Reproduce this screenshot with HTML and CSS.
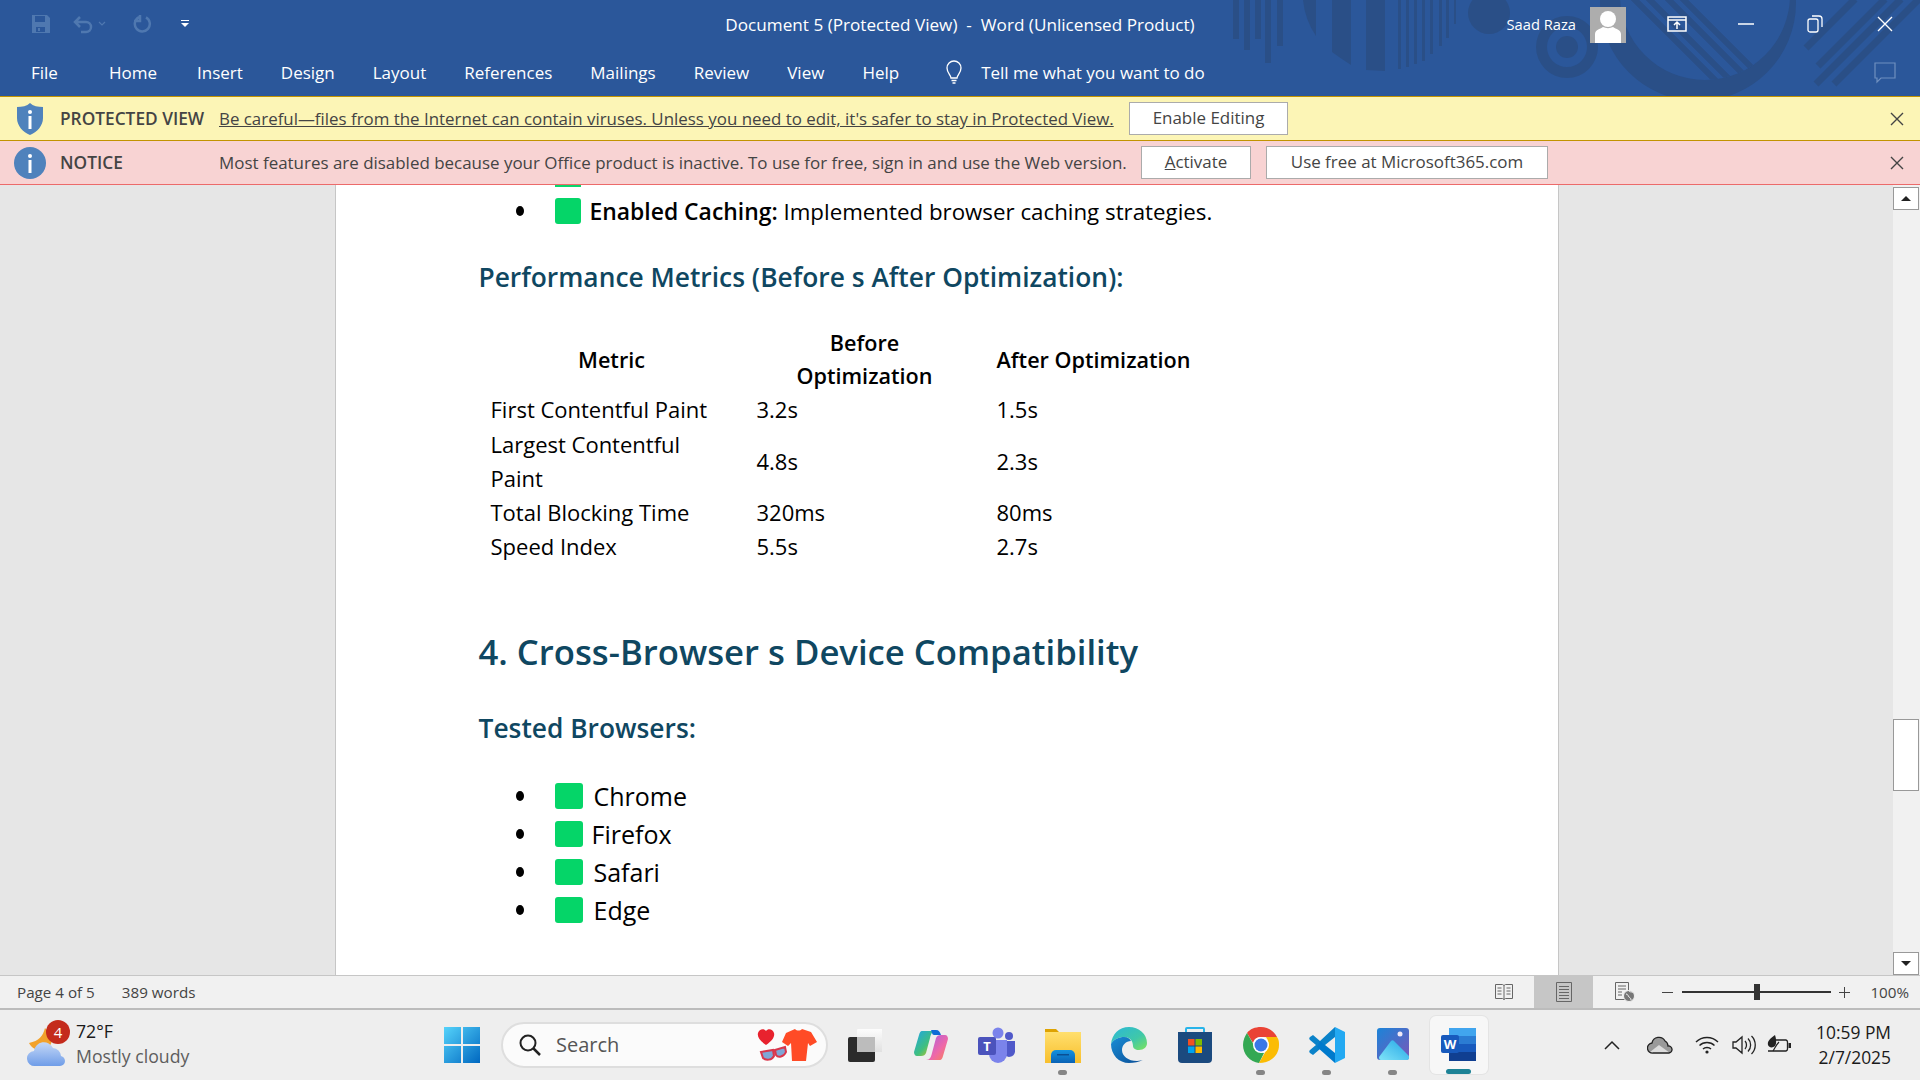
FILE: index.html
```html
<!DOCTYPE html>
<html lang="en">
<head>
    <meta charset="UTF-8">
    <title>Document 5 (Protected View) - Word (Unlicensed Product)</title>
    <link rel="stylesheet" href="styles.css">
</head>
<body>
    <!-- Title bar and ribbon tabs -->
    <header class="ribbon">
        <svg class="ribbon-art" viewBox="1200 0 720 96" width="720" height="96">
            <defs>
                <clipPath id="ringInner"><circle cx="1705" cy="-5" r="85"/></clipPath>
            </defs>
            <g fill="#2a4f87">
                <rect x="1233" width="6" height="39"/>
                <rect x="1244" width="6" height="50"/>
                <rect x="1255" width="6" height="39"/>
                <rect x="1265" width="6" height="63"/>
                <rect x="1277" width="6" height="46"/>
                <path d="M1303 0Q1305 20 1316 36V0Z"/>
                <path d="M1332 0V52Q1340 58 1351 65V0Z"/>
                <path d="M1366 0V70L1385 71V0Z"/>
                <rect x="1398" width="3" height="69"/>
                <rect x="1406" width="3" height="67"/>
                <rect x="1414" width="3" height="64"/>
                <rect x="1422" width="3" height="61"/>
                <rect x="1430" width="3" height="54"/>
                <rect x="1439" width="3" height="46"/>
                <rect x="1446" width="3" height="38"/>
                <rect x="1454" width="2" height="24"/>
                <circle cx="1489" cy="13" r="21"/>
                <path fill-rule="evenodd" d="M1536 47a31 31 0 1 0 62 0a31 31 0 1 0-62 0ZM1547 47a20 20 0 1 1 40 0a20 20 0 1 1-40 0Z"/>
                <circle cx="1567" cy="47" r="11"/>
                <path fill-rule="evenodd" d="M1600 3a98 98 0 1 0 196 0a98 98 0 1 0-196 0ZM1620-5a85 85 0 1 1 170 0a85 85 0 1 1-170 0Z"/>
            </g>
            <g stroke="#2a4f87" stroke-width="6" clip-path="url(#ringInner)">
                <path d="M1625-10L1730 95M1640-10L1745 95M1655-14L1760 91M1670-14L1775 91"/>
            </g>
            <g stroke="#2a4f87" stroke-width="7">
                <path d="M1806 48L1855-1M1818 66L1885-1M1816 84L1901-1M1834 84L1919-1"/>
            </g>
        </svg>

        <div class="title-row">
            <div class="qat">
                <svg width="20" height="20" viewBox="0 0 20 20"><path fill="#4f78b0" d="M1 1h15l3 3v15H1z"/><path fill="#2b579a" d="M4 2h10v6H4zM5 13h9v5H5z"/><path fill="#4f78b0" d="M7 14h2v3H7z"/></svg>
                <svg class="qat-undo" width="24" height="20" viewBox="0 0 24 20"><path fill="none" stroke="#4f78b0" stroke-width="2.5" d="M8 3L3 8l5 5M3 8h11a5 5 0 0 1 0 10H9"/></svg>
                <svg class="qat-drop" width="8" height="6" viewBox="0 0 8 6"><path fill="none" stroke="#4f78b0" stroke-width="1.2" d="M1 1l3 3 3-3"/></svg>
                <svg class="qat-redo" width="20" height="20" viewBox="0 0 20 20"><path fill="none" stroke="#4f78b0" stroke-width="2.5" d="M6 3.2a7.5 7.5 0 1 0 7 .2M7 1v6H1"/></svg>
                <svg class="qat-more" width="8" height="10" viewBox="0 0 8 10"><path fill="#fff" d="M0 1h8v1H0zM0 4h8L4 8z"/></svg>
            </div>
            <div class="doc-title">Document 5 (Protected View) &nbsp;-&nbsp; Word (Unlicensed Product)</div>
            <div class="win-tools">
                <span class="user-name">Saad Raza</span>
                <svg class="avatar" width="36" height="36" viewBox="0 0 36 36"><rect width="36" height="36" fill="#adadad"/><circle cx="18" cy="12" r="8" fill="#fff"/><path fill="#fff" d="M5 36v-9c0-4 5-5 8-7 3 1.500 7 1.500 10 0 3 2 8 3 8 7v9z"/></svg>
                <svg class="win-btn-display" width="20" height="16" viewBox="0 0 20 16"><path fill="none" stroke="#fff" stroke-width="1.500" d="M1 1h18v14H1zM1 4h18M10 13V6.500M7 9l3-3 3 3"/></svg>
                <svg class="win-btn-min" width="16" height="16" viewBox="0 0 16 16"><path stroke="#fff" stroke-width="1.500" d="M0 8h16"/></svg>
                <svg class="win-btn-restore" width="16" height="18" viewBox="0 0 16 18"><path fill="none" stroke="#fff" stroke-width="1.300" d="M1 6a2 2 0 0 1 2-2h6a2 2 0 0 1 2 2v9a2 2 0 0 1-2 2H3a2 2 0 0 1-2-2zM5 1h7a3 3 0 0 1 3 3v8"/></svg>
                <svg class="win-btn-close" width="16" height="16" viewBox="0 0 16 16"><path stroke="#fff" stroke-width="1.400" d="M1 1l14 14M15 1L1 15"/></svg>
            </div>
        </div>

        <nav class="tabs-row">
            <span class="tab-file">File</span>
            <span class="tab-home">Home</span>
            <span>Insert</span>
            <span>Design</span>
            <span>Layout</span>
            <span>References</span>
            <span>Mailings</span>
            <span>Review</span>
            <span>View</span>
            <span>Help</span>
            <span class="tell-me">
                <svg width="20" height="24" viewBox="0 0 20 24"><path fill="none" stroke="#fff" stroke-width="1.300" d="M7 18c0-3-4-5-4-10a7 7 0 0 1 14 0c0 5-4 7-4 10zM7.500 20.500h5M8.500 23h3"/></svg>
                Tell me what you want to do
            </span>
            <svg class="comment-icon" width="22" height="22" viewBox="0 0 22 22"><path fill="none" stroke="#6f8fbf" stroke-width="1.200" d="M1 1h20v15H7l-4 4v-4H1z"/></svg>
        </nav>
    </header>

    <!-- Message bars -->
    <div class="msg-bar msg-yellow">
        <svg class="msg-icon" width="28" height="32" viewBox="0 0 28 32"><path fill="#4f82bc" d="M14 0c3 3 8 4 13 4v11c0 8-6 14-13 17C7 29 1 23 1 15V4c5 0 10-1 13-4z"/><circle cx="14" cy="9" r="2" fill="#fff"/><rect x="12.500" y="13" width="3" height="13" fill="#fff"/></svg>
        <strong class="msg-label">PROTECTED VIEW</strong>
        <a class="msg-text msg-link">Be careful—files from the Internet can contain viruses. Unless you need to edit, it's safer to stay in Protected View.</a>
        <button class="msg-btn btn-enable">Enable Editing</button>
        <svg class="msg-close" width="14" height="14" viewBox="0 0 14 14"><path stroke="#444" stroke-width="1.400" d="M1 1l12 12M13 1L1 13"/></svg>
    </div>
    <div class="msg-bar msg-pink">
        <svg class="msg-icon msg-icon-round" width="32" height="32" viewBox="0 0 32 32"><circle cx="16" cy="16" r="16" fill="#4f82bc"/><circle cx="16" cy="9" r="2" fill="#fff"/><rect x="14.500" y="13" width="3" height="13" fill="#fff"/></svg>
        <strong class="msg-label">NOTICE</strong>
        <span class="msg-text msg-notice">Most features are disabled because your Office product is inactive. To use for free, sign in and use the Web version.</span>
        <button class="msg-btn btn-activate"><u>A</u>ctivate</button>
        <button class="msg-btn btn-free">Use free at Microsoft365.com</button>
        <svg class="msg-close" width="14" height="14" viewBox="0 0 14 14"><path stroke="#444" stroke-width="1.400" d="M1 1l12 12M13 1L1 13"/></svg>
    </div>

    <!-- Document area -->
    <main class="doc-area">
        <div class="doc-scroll">
            <article class="page">
                <div class="clipped-square"></div>
                <div class="doc-item item-first">
                    <i class="dot"></i><i class="square square-small"></i>
                    <span class="item-body"><b>Enabled Caching:</b> Implemented browser caching strategies.</span>
                </div>

                <h3 class="doc-h3 h3-metrics">Performance Metrics (Before s After Optimization):</h3>

                <table class="metrics">
                    <thead>
                        <tr>
                            <th>Metric</th>
                            <th>Before Optimization</th>
                            <th>After Optimization</th>
                        </tr>
                    </thead>
                    <tbody>
                        <tr><td>First Contentful Paint</td><td>3.2s</td><td>1.5s</td></tr>
                        <tr><td>Largest Contentful Paint</td><td>4.8s</td><td>2.3s</td></tr>
                        <tr><td>Total Blocking Time</td><td>320ms</td><td>80ms</td></tr>
                        <tr><td>Speed Index</td><td>5.5s</td><td>2.7s</td></tr>
                    </tbody>
                </table>

                <h2 class="doc-h2">4. Cross-Browser s Device Compatibility</h2>
                <h3 class="doc-h3 h3-tested">Tested Browsers:</h3>

                <ul class="browser-list">
                    <li class="doc-item"><i class="dot"></i><i class="square"></i><span>Chrome</span></li>
                    <li class="doc-item"><i class="dot"></i><i class="square"></i><span class="firefox">Firefox</span></li>
                    <li class="doc-item"><i class="dot"></i><i class="square"></i><span>Safari</span></li>
                    <li class="doc-item"><i class="dot"></i><i class="square"></i><span>Edge</span></li>
                </ul>
            </article>
        </div>
        <aside class="scrollbar">
            <div class="sb-btn"><i class="arrow-up"></i></div>
            <div class="sb-thumb"></div>
            <div class="sb-btn sb-btn-down"><i class="arrow-down"></i></div>
        </aside>
    </main>

    <!-- Word status bar -->
    <footer class="status-bar">
        <span class="status-page">Page 4 of 5</span>
        <span class="status-words">389 words</span>
        <div class="status-right">
            <svg class="view-icon" width="20" height="20" viewBox="0 0 20 20"><path fill="none" stroke="#666" d="M1.500 2.500h7l1.500 1 1.500-1h7v14h-7l-1.500 1-1.500-1h-7zM10 3.500v14M3.500 6h4M3.500 9h4M3.500 12h4M12.500 6h4M12.500 9h4M12.500 12h4"/></svg>
            <div class="view-active">
                <svg width="18" height="22" viewBox="0 0 18 22"><path fill="none" stroke="#666" d="M1.500 1.500h15v19h-15zM4 5.500h10M4 8.500h10M4 11.500h10M4 14.500h10M4 17.500h10"/></svg>
            </div>
            <svg class="view-web" width="22" height="22" viewBox="0 0 22 22"><path fill="none" stroke="#666" d="M1.500 1.500h13v17h-13zM4 5h8M4 8h8M4 11h4M4 14h4"/><circle cx="15" cy="15" r="5.500" fill="#777" stroke="#f1f1f1"/><path stroke="#f1f1f1" fill="none" d="M12 13c2 0 2 2 3 3s2 1 2 3M15 10c1 1 2 1 4 1"/></svg>
            <span class="zoom-minus"></span>
            <div class="zoom-slider"><i class="zoom-thumb"></i></div>
            <span class="zoom-plus"></span>
            <span class="zoom-value">100%</span>
        </div>
    </footer>

    <!-- Windows taskbar -->
    <footer class="taskbar">
        <div class="weather">
            <svg class="weather-icon" width="42" height="46" viewBox="0 0 42 46">
                <defs>
                    <linearGradient id="cloudFill" x1="0" y1="0" x2="0" y2="1"><stop offset="0" stop-color="#c5d8f7"/><stop offset="1" stop-color="#6f9de8"/></linearGradient>
                </defs>
                <path fill="#f2a22c" d="M18 6c-2 8-6 13-16 15 3 6 9 8 15 7 6-2 9-8 8-14z"/>
                <path fill="url(#cloudFill)" d="M8 44a7.500 7.500 0 0 1-1-15 10 10 0 0 1 19-3 8.500 8.500 0 0 1 8 8 5.500 5.500 0 0 1 4 5 5 5 0 0 1-5 5z"/>
            </svg>
            <span class="weather-badge">4</span>
            <div class="weather-text">
                <span class="weather-temp">72°F</span>
                <span class="weather-desc">Mostly cloudy</span>
            </div>
        </div>

        <div class="tb-item tb-start">
            <svg width="36" height="36" viewBox="0 0 36 36">
                <defs>
                    <linearGradient id="winFill" x1="0" y1="0" x2="1" y2="1"><stop offset="0" stop-color="#55d3fb"/><stop offset="1" stop-color="#0067c0"/></linearGradient>
                </defs>
                <path fill="url(#winFill)" d="M0 0h17v17H0zM19 0h17v17H19zM0 19h17v17H0zM19 19h17v17H19z"/>
            </svg>
        </div>

        <div class="tb-search">
            <svg width="24" height="24" viewBox="0 0 24 24"><circle cx="10" cy="10" r="7.500" fill="none" stroke="#222" stroke-width="2"/><path stroke="#222" stroke-width="2.500" d="M15.500 15.500L22 22"/></svg>
            <span>Search</span>
            <svg class="search-art" width="64" height="38" viewBox="0 0 64 38">
                <path fill="#e8222e" d="M12 19C6 15 3 11 4 7c1-4 6-5 8-2 2-3 7-2 8 2 1 4-2 8-8 12z"/>
                <path fill="#ff4b26" d="M32 7l9-4c2 2 5 2 7 0l9 3 6 10-7 4-2-3-2 18H38l-1-18-3 3-6-4z"/>
                <path fill="#7fa6d6" stroke="#d9364b" stroke-width="2" d="M7 26l12-2 1 6c-2 4-8 5-11 2zM21 24l10-3 1 5c-2 5-8 6-10 3z"/>
            </svg>
        </div>

        <div class="tb-item tb-taskview">
            <svg width="36" height="36" viewBox="0 0 36 36">
                <defs>
                    <linearGradient id="tvBack" x1="0" y1="0" x2="0" y2="1"><stop offset="0" stop-color="#fff"/><stop offset="1" stop-color="#dedede"/></linearGradient>
                </defs>
                <rect x="2" y="10" width="27" height="25" rx="2" fill="#2b2b2b"/>
                <rect x="11" y="2" width="26" height="23" rx="1" fill="url(#tvBack)" fill-opacity=".85"/>
                <rect x="11" y="10" width="18" height="15" fill="#bcbcbc"/>
            </svg>
        </div>

        <div class="tb-item">
            <svg width="36" height="36" viewBox="0 0 36 36">
                <defs>
                    <linearGradient id="copA" x1="0" y1="0" x2="1" y2="1"><stop offset="0" stop-color="#1fa5e8"/><stop offset=".55" stop-color="#3fbf7f"/><stop offset="1" stop-color="#f7c300"/></linearGradient>
                    <linearGradient id="copB" x1="0" y1="0" x2="1" y2="1"><stop offset="0" stop-color="#a45ce8"/><stop offset=".6" stop-color="#ee68a8"/><stop offset="1" stop-color="#f9834f"/></linearGradient>
                </defs>
                <path fill="url(#copA)" d="M9 4h14c-4 0-5 3-6 7l-4 15c-1 2-2 3-5 3H4c-2 0-3-2-3-4L6 8c.5-2 1.500-4 3-4z"/>
                <path fill="url(#copB)" d="M27 33H13c4 0 5-3 6-7l4-15c1-2 2-3 5-3h4c2 0 3 2 3 4l-5 17c-.5 2-1.500 4-3 4z"/>
                <path fill="#0f6cd6" d="M18 3h5c3 0 4 2 5 5h-7c-2 0-2-3-3-5z"/>
            </svg>
        </div>

        <div class="tb-item">
            <svg width="38" height="36" viewBox="0 0 38 36">
                <circle cx="20" cy="6" r="5.500" fill="#7b83eb"/>
                <circle cx="31" cy="9" r="4" fill="#5059c9"/>
                <path fill="#5059c9" d="M26 14h11v11a6 6 0 0 1-11 2z"/>
                <path fill="#7b83eb" d="M11 13h18v14a9 9 0 0 1-18 0z"/>
                <rect x="0" y="10" width="18" height="18" rx="2" fill="#4b53bc"/>
                <text class="icon-letter" x="9" y="24" text-anchor="middle" font-size="13">T</text>
            </svg>
        </div>

        <div class="tb-item">
            <svg width="36" height="36" viewBox="0 0 36 36">
                <defs>
                    <linearGradient id="folder" x1="0" y1="0" x2="0" y2="1"><stop offset="0" stop-color="#ffdf6e"/><stop offset="1" stop-color="#f8bf2c"/></linearGradient>
                    <linearGradient id="folderTab" x1="0" y1="0" x2="0" y2="1"><stop offset="0" stop-color="#1392e0"/><stop offset="1" stop-color="#0a62b5"/></linearGradient>
                </defs>
                <path fill="#dea302" d="M0 2h11l4 4h21v6H0z"/>
                <rect y="5" width="36" height="31" fill="url(#folder)"/>
                <path fill="url(#folderTab)" d="M6 36v-8a5 5 0 0 1 5-5h14a5 5 0 0 1 5 5v8z"/>
                <rect x="12" y="27" width="12" height="1.500" fill="#0a4f94"/>
            </svg>
            <i class="tb-dot"></i>
        </div>

        <div class="tb-item">
            <svg width="36" height="36" viewBox="0 0 36 36">
                <defs>
                    <linearGradient id="edgeTop" x1="0" y1="0" x2="1" y2="1"><stop offset="0" stop-color="#2bb8d8"/><stop offset=".6" stop-color="#40c8a8"/><stop offset="1" stop-color="#7ee35c"/></linearGradient>
                    <linearGradient id="edgeLow" x1="0" y1="0" x2="1" y2="1"><stop offset="0" stop-color="#1a8ed6"/><stop offset="1" stop-color="#0a4d96"/></linearGradient>
                </defs>
                <path fill="url(#edgeTop)" d="M18 0c10 0 18 7 18 16 0 4-3 7-8 7-4 0-6-2-6-4 0-6-4-9-9-9C8 10 3 12 0 17 1 7 8 0 18 0z"/>
                <path fill="url(#edgeLow)" d="M0 17c3-5 8-7 13-7 4 0 6 2 7 4-5 0-9 4-9 9 0 6 6 11 15 11 3 0 5-1 6-1-4 2-9 3-14 3C8 36 0 28 0 17z"/>
            </svg>
        </div>

        <div class="tb-item">
            <svg width="36" height="36" viewBox="0 0 36 36">
                <path fill="none" stroke="#28b4ea" stroke-width="2" d="M9 7V2a1 1 0 0 1 1-1h16a1 1 0 0 1 1 1v5"/>
                <path fill="#1b4a7f" d="M1 5h34v27a4 4 0 0 1-4 4H5a4 4 0 0 1-4-4z"/>
                <path fill="#f25022" d="M11 12h6.500v6.500H11z"/><path fill="#7fba00" d="M18.500 12H25v6.500h-6.500z"/>
                <path fill="#00a4ef" d="M11 19.500h6.500V26H11z"/><path fill="#ffb900" d="M18.500 19.500H25V26h-6.500z"/>
            </svg>
        </div>

        <div class="tb-item">
            <svg width="36" height="36" viewBox="0 0 36 36">
                <path fill="#ea4335" d="M18 0c7 0 13 4 16 10H18a8 8 0 0 0-8 6L4 6c3-4 8-6 14-6z"/>
                <path fill="#34a853" d="M4 6l8 14c2 3 5 6 9 6l-5 10C7 35 0 27 0 18 0 13 2 9 4 6z"/>
                <path fill="#fbbc04" d="M34 10c2 3 2 5 2 8 0 10-8 18-20 18l8-14c2-3 2-8-1-12z"/>
                <circle cx="18" cy="18" r="8" fill="#fff"/>
                <circle cx="18" cy="18" r="6.500" fill="#3b78e7"/>
            </svg>
            <i class="tb-dot"></i>
        </div>

        <div class="tb-item">
            <svg width="36" height="36" viewBox="0 0 36 36">
                <path fill="#23a9f2" d="M26 0l10 5v26l-10 5z"/>
                <path fill="#0a82c9" d="M26 0v10L11 22 4 28l-3-2c-1-1-1-2 0-3l6-5-6-5c-1-1-1-2 0-3l3-2 7 6z"/>
                <path fill="#007acc" d="M11 14L26 26v10L8 20z"/>
            </svg>
            <i class="tb-dot"></i>
        </div>

        <div class="tb-item">
            <svg width="32" height="34" viewBox="0 0 32 34">
                <defs>
                    <linearGradient id="phBg" x1="0" y1="0" x2="1" y2="1"><stop offset="0" stop-color="#1b84d8"/><stop offset="1" stop-color="#7a57b8"/></linearGradient>
                    <linearGradient id="phHill" x1="0" y1="1" x2="1" y2="0"><stop offset="0" stop-color="#7fe3f8"/><stop offset="1" stop-color="#23a6e6"/></linearGradient>
                </defs>
                <rect width="32" height="32" rx="3" fill="url(#phBg)"/>
                <circle cx="23" cy="6" r="2.500" fill="#f1e9f7"/>
                <path fill="url(#phHill)" d="M2 29l12-16c1-1 2-1 3 0l15 15v2a2 2 0 0 1-2 2H4c-2 0-2-2-2-3z"/>
            </svg>
            <i class="tb-dot"></i>
        </div>

        <div class="tb-item tb-active">
            <svg width="36" height="34" viewBox="0 0 36 34">
                <rect x="8" width="27" height="8" fill="#41a5ee"/>
                <rect x="8" y="8" width="27" height="8" fill="#2b7cd3"/>
                <rect x="8" y="16" width="27" height="8" fill="#185abd"/>
                <rect x="8" y="24" width="27" height="9" fill="#103f91"/>
                <rect y="7" width="18" height="18" rx="2" fill="#185abd"/>
                <text class="icon-letter" x="9" y="21" text-anchor="middle" font-size="13">W</text>
            </svg>
            <i class="tb-bar"></i>
        </div>

        <div class="tray">
            <svg class="tray-up" width="16" height="10" viewBox="0 0 16 10"><path fill="none" stroke="#222" stroke-width="1.500" d="M1 9l7-7 7 7"/></svg>
            <svg class="tray-cloud" width="26" height="18" viewBox="0 0 26 18"><path fill="#9a9a9a" d="M6 17a5 5 0 0 1-1-10 7 7 0 0 1 13-2 6 6 0 0 1 3 5 3.500 3.500 0 0 1 1 7z"/><path fill="#dcdcdc" d="M3 16l9-7 11 8H6z"/><path fill="none" stroke="#222" stroke-width="1.300" d="M6 17a5 5 0 0 1-1-10 7 7 0 0 1 13-2 6 6 0 0 1 3 5 3.500 3.500 0 0 1 1 7z"/></svg>
            <svg class="tray-wifi" width="24" height="18" viewBox="0 0 24 18"><path fill="none" stroke="#222" stroke-width="1.400" d="M1 6c6-6 16-6 22 0M4.500 9.500c4-4 11-4 15 0M8 13c2-2 6-2 8 0"/><circle cx="12" cy="16" r="1.600" fill="#222"/></svg>
            <svg class="tray-vol" width="24" height="20" viewBox="0 0 24 20"><path fill="none" stroke="#222" stroke-width="1.300" d="M1 7v6h3l6 5V2L4 7zM13 6c2 2 2 6 0 8M16 3.500c3.500 3.500 3.500 9.500 0 13M19.500 1c5 5 5 13 0 18"/></svg>
            <svg class="tray-batt" width="24" height="20" viewBox="0 0 24 20"><path fill="none" stroke="#222" stroke-width="1.300" d="M5 5h14a2 2 0 0 1 1.500 2v7a2 2 0 0 1-1.500 2H1"/><path fill="#222" d="M21.500 8H24v5h-2.500zM8 0C4 3 0 6 1 10c1 3 5 3 7 1 2-3 1-8 0-11z"/><path fill="none" stroke="#222" stroke-width="1.200" d="M12 7C9 10 8 13 6 16"/></svg>
            <div class="clock">
                <span>10:59 PM</span>
                <span>2/7/2025</span>
            </div>
        </div>
    </footer>
</body>
</html>
```
FILE: styles.css
```css
html, body {
    margin: 0;
    padding: 0;
}
body {
    width: 1920px;
    height: 1080px;
    overflow: hidden;
    display: flex;
    flex-direction: column;
    font-family: "Open Sans", Arial, sans-serif;
    background: #eeeeee;
}

/* ribbon */
.ribbon {
    position: relative;
    height: 96px;
    flex: none;
    background: #2b579a;
    color: #fff;
    overflow: hidden;
}
.ribbon-art {
    position: absolute;
    top: 0;
    right: 0;
}
.title-row {
    position: relative;
    height: 48px;
    display: grid;
    grid-template-columns: 1fr auto 1fr;
    align-items: center;
}
.qat {
    display: flex;
    align-items: center;
    padding-left: 31px;
}
.qat-undo {
    margin-left: 21px;
}
.qat-drop {
    margin-left: 2px;
}
.qat-redo {
    margin-left: 27px;
}
.qat-more {
    margin-left: 28px;
}
.doc-title {
    font-size: 17.150px;
    white-space: nowrap;
}
.win-tools {
    display: flex;
    align-items: center;
    justify-content: flex-end;
}
.user-name {
    font-size: 14.700px;
    margin-right: 14px;
}
.avatar {
    margin-top: 2px;
}
.win-btn-display {
    margin-left: 41px;
}
.win-btn-min {
    margin-left: 51px;
}
.win-btn-restore {
    margin-left: 53px;
}
.win-btn-close {
    margin-left: 54px;
    margin-right: 27px;
}
.tabs-row {
    position: relative;
    height: 48px;
    display: flex;
    align-items: center;
    gap: 38px;
    padding-left: 31px;
    font-size: 17px;
}
.tab-file {
    margin-right: 13px;
}
.tab-home {
    margin-right: 2px;
}
.tell-me {
    display: flex;
    align-items: center;
    gap: 17px;
    margin-left: 7px;
}
.comment-icon {
    margin-left: auto;
    margin-right: 24px;
    margin-top: 2px;
}

/* message bars */
.msg-bar {
    height: 43px;
    flex: none;
    box-sizing: content-box;
    display: flex;
    align-items: center;
    color: #444;
    font-size: 16.950px;
    white-space: nowrap;
}
.msg-yellow {
    background: #fcf5b6;
    border-top: 1px solid #c29300;
}
.msg-pink {
    background: #f8d3d3;
    border-top: 1px solid #c29300;
    border-bottom: 1px solid #ec6a6a;
}
.msg-icon {
    flex: none;
    margin: 0 16px;
}
.msg-icon-round {
    margin: 0 14px;
}
.msg-label {
    width: 159px;
    flex: none;
    font-size: 17.300px;
    font-weight: 600;
}
.msg-text {
    width: 910px;
    flex: none;
}
.msg-link {
    font-size: 16.900px;
    text-decoration: underline;
}
.msg-notice {
    width: 922px;
}
.msg-btn {
    flex: none;
    height: 33px;
    box-sizing: border-box;
    padding: 0 0 2px;
    background: #fff;
    border: 1px solid #ababab;
    color: #444;
    font: inherit;
}
.btn-enable {
    width: 159px;
}
.btn-activate {
    width: 110px;
}
.btn-free {
    width: 282px;
    margin-left: 15px;
}
.msg-close {
    flex: none;
    margin-left: auto;
    margin-right: 16px;
}

/* document */
.doc-area {
    flex: 1;
    min-height: 0;
    display: flex;
    background: #e6e6e6;
}
.doc-scroll {
    flex: 1;
    display: flex;
    justify-content: center;
    overflow: hidden;
}
.page {
    width: 1224px;
    box-sizing: border-box;
    padding-left: 143px;
    background: #fff;
    border-left: 1px solid #c6c6c6;
    border-right: 1px solid #c6c6c6;
    color: #000;
    font-size: 22.300px;
}
.clipped-square {
    width: 26px;
    height: 2px;
    margin-left: 76px;
    background: #0ad66d;
}
.doc-item {
    display: flex;
    align-items: center;
    height: 38px;
    list-style: none;
}
.item-first {
    height: 34px;
    margin-top: 7px;
}
.dot {
    width: 8px;
    height: 10px;
    margin-left: 37px;
    margin-right: 31px;
    border-radius: 50%;
    background: #000;
    flex: none;
}
.square {
    width: 28px;
    height: 26px;
    margin-right: 11px;
    border-radius: 3px;
    background: #05d568;
    flex: none;
}
.square-small {
    width: 26px;
    margin-right: 9px;
}
.item-body b {
    font-size: 22.900px;
    font-weight: 600;
}
.doc-h3 {
    margin: 0;
    color: #0f4761;
    font-size: 26.350px;
    line-height: 40px;
    font-weight: 600;
}
.h3-metrics {
    margin-top: 29px;
}
.h3-tested {
    margin-top: 31px;
}
.doc-h2 {
    margin: 64px 0 0;
    color: #0f4761;
    font-size: 34.700px;
    line-height: 50px;
    font-weight: 600;
}
.metrics {
    margin-top: 29px;
    border-collapse: collapse;
    table-layout: fixed;
    width: 724px;
}
.metrics th, .metrics td {
    padding: 0 32px 0 12px;
    line-height: 34.200px;
    text-align: left;
    font-size: 22px;
    font-weight: 400;
}
.metrics td:nth-child(3) {
    padding-right: 0;
}
.metrics th {
    font-size: 21.600px;
    line-height: 33.200px;
    font-weight: 600;
    text-align: center;
    padding: 0 30px;
}
.metrics th:nth-child(3) {
    padding: 0;
}
.metrics th:nth-child(1), .metrics td:nth-child(1) {
    width: 222px;
}
.metrics th:nth-child(1) {
    width: 206px;
}
.metrics th:nth-child(2) {
    width: 180px;
}
.metrics td:nth-child(2) {
    width: 196px;
}
.browser-list {
    margin: 29px 0 0;
    padding: 0;
    font-size: 25px;
}
.firefox {
    margin-left: -2px;
}

/* scroll bar */
.scrollbar {
    width: 27px;
    flex: none;
    display: flex;
    flex-direction: column;
    box-sizing: border-box;
    padding-top: 2px;
    background: #f1f1f1;
}
.sb-btn {
    width: 26px;
    height: 23px;
    box-sizing: border-box;
    display: flex;
    align-items: center;
    justify-content: center;
    background: #fff;
    border: 1px solid #999;
}
.sb-btn-down {
    margin-top: auto;
}
.sb-thumb {
    width: 26px;
    height: 72px;
    margin-top: 509px;
    box-sizing: border-box;
    background: #fff;
    border: 1px solid #999;
}
.arrow-up {
    border: 5px solid transparent;
    border-top: 0;
    border-bottom: 5px solid #222;
    width: 0;
}
.arrow-down {
    border: 5px solid transparent;
    border-bottom: 0;
    border-top: 5px solid #222;
    width: 0;
}

/* status bar */
.status-bar {
    height: 35px;
    flex: none;
    box-sizing: border-box;
    display: flex;
    align-items: center;
    background: #f1f1f1;
    border-top: 1px solid #c6c6c6;
    border-bottom: 2px solid #bcbcbc;
    font-size: 15.200px;
    color: #444;
}
.status-page {
    margin-left: 17px;
}
.status-words {
    margin-left: 27px;
}
.status-right {
    margin-left: auto;
    height: 100%;
    display: flex;
    align-items: center;
}
.view-active {
    width: 59px;
    height: 100%;
    margin-left: 20px;
    display: flex;
    align-items: center;
    justify-content: center;
    background: #c6c6c6;
}
.view-web {
    margin-left: 21px;
}
.zoom-minus, .zoom-plus {
    position: relative;
    width: 11px;
    height: 1px;
    background: #444;
}
.zoom-minus {
    margin-left: 26px;
}
.zoom-plus {
    margin-left: 8px;
}
.zoom-plus::after {
    content: "";
    position: absolute;
    left: 5px;
    top: -5px;
    width: 1px;
    height: 11px;
    background: #444;
}
.zoom-slider {
    position: relative;
    width: 149px;
    height: 2px;
    margin-left: 9px;
    background: #333;
}
.zoom-thumb {
    position: absolute;
    left: 72px;
    top: -7px;
    width: 6px;
    height: 16px;
    background: #333;
}
.zoom-value {
    margin-left: 20px;
    margin-right: 11px;
}

/* taskbar */
.taskbar {
    height: 70px;
    flex: none;
    display: flex;
    align-items: center;
    box-sizing: border-box;
    padding-bottom: 1px;
    background: #eeeeee;
}
.weather {
    width: 429px;
    flex: none;
    display: flex;
    align-items: center;
    position: relative;
    box-sizing: border-box;
    padding-left: 27px;
}
.weather-icon {
    flex: none;
}
.weather-badge {
    position: absolute;
    left: 46px;
    top: 0;
    width: 24px;
    height: 24px;
    border-radius: 50%;
    background: #c42b1c;
    color: #fff;
    font-size: 15px;
    line-height: 24px;
    text-align: center;
}
.weather-text {
    display: flex;
    flex-direction: column;
    margin-left: 7px;
    margin-top: -1px;
    font-size: 17.700px;
    line-height: 25px;
}
.weather-temp {
    color: #1a1a1a;
}
.weather-desc {
    color: #5d5d5d;
}
.tb-item {
    position: relative;
    width: 66px;
    height: 58px;
    flex: none;
    display: flex;
    align-items: center;
    justify-content: center;
}
.tb-start {
    margin-right: 6px;
}
.tb-taskview {
    margin-left: 3px;
    margin-right: 1px;
}
.tb-search {
    width: 327px;
    height: 46px;
    flex: none;
    box-sizing: border-box;
    display: flex;
    align-items: center;
    padding-left: 15px;
    background: #fbfbfb;
    border: 2px solid #dedede;
    border-radius: 23px;
    font-size: 20px;
    color: #555;
}
.tb-search span {
    margin-left: 14px;
}
.search-art {
    margin-left: auto;
    margin-right: 8px;
}
.icon-letter {
    fill: #fff;
    font-family: "Open Sans", Arial, sans-serif;
    font-weight: 700;
}
.tb-dot {
    position: absolute;
    left: 28px;
    bottom: -1px;
    width: 9px;
    height: 5px;
    border-radius: 3px;
    background: #858585;
}
.tb-active {
    width: 58px;
    margin: 0 4px;
    background: #f7f7f7;
    border-radius: 6px;
    box-shadow: 0 0 0 1px #e4e4e4;
}
.tb-bar {
    position: absolute;
    left: 16px;
    bottom: 0;
    width: 25px;
    height: 5px;
    border-radius: 3px;
    background: #1d8296;
}
.tray {
    margin-left: auto;
    display: flex;
    align-items: center;
}
.tray-cloud {
    margin-left: 27px;
}
.tray-wifi {
    margin-left: 22px;
}
.tray-vol {
    margin-left: 13px;
}
.tray-batt {
    margin-left: 11px;
}
.clock {
    display: flex;
    flex-direction: column;
    align-items: flex-end;
    margin-left: 25px;
    margin-right: 29px;
    font-size: 17.400px;
    line-height: 25px;
    color: #1a1a1a;
}
```
